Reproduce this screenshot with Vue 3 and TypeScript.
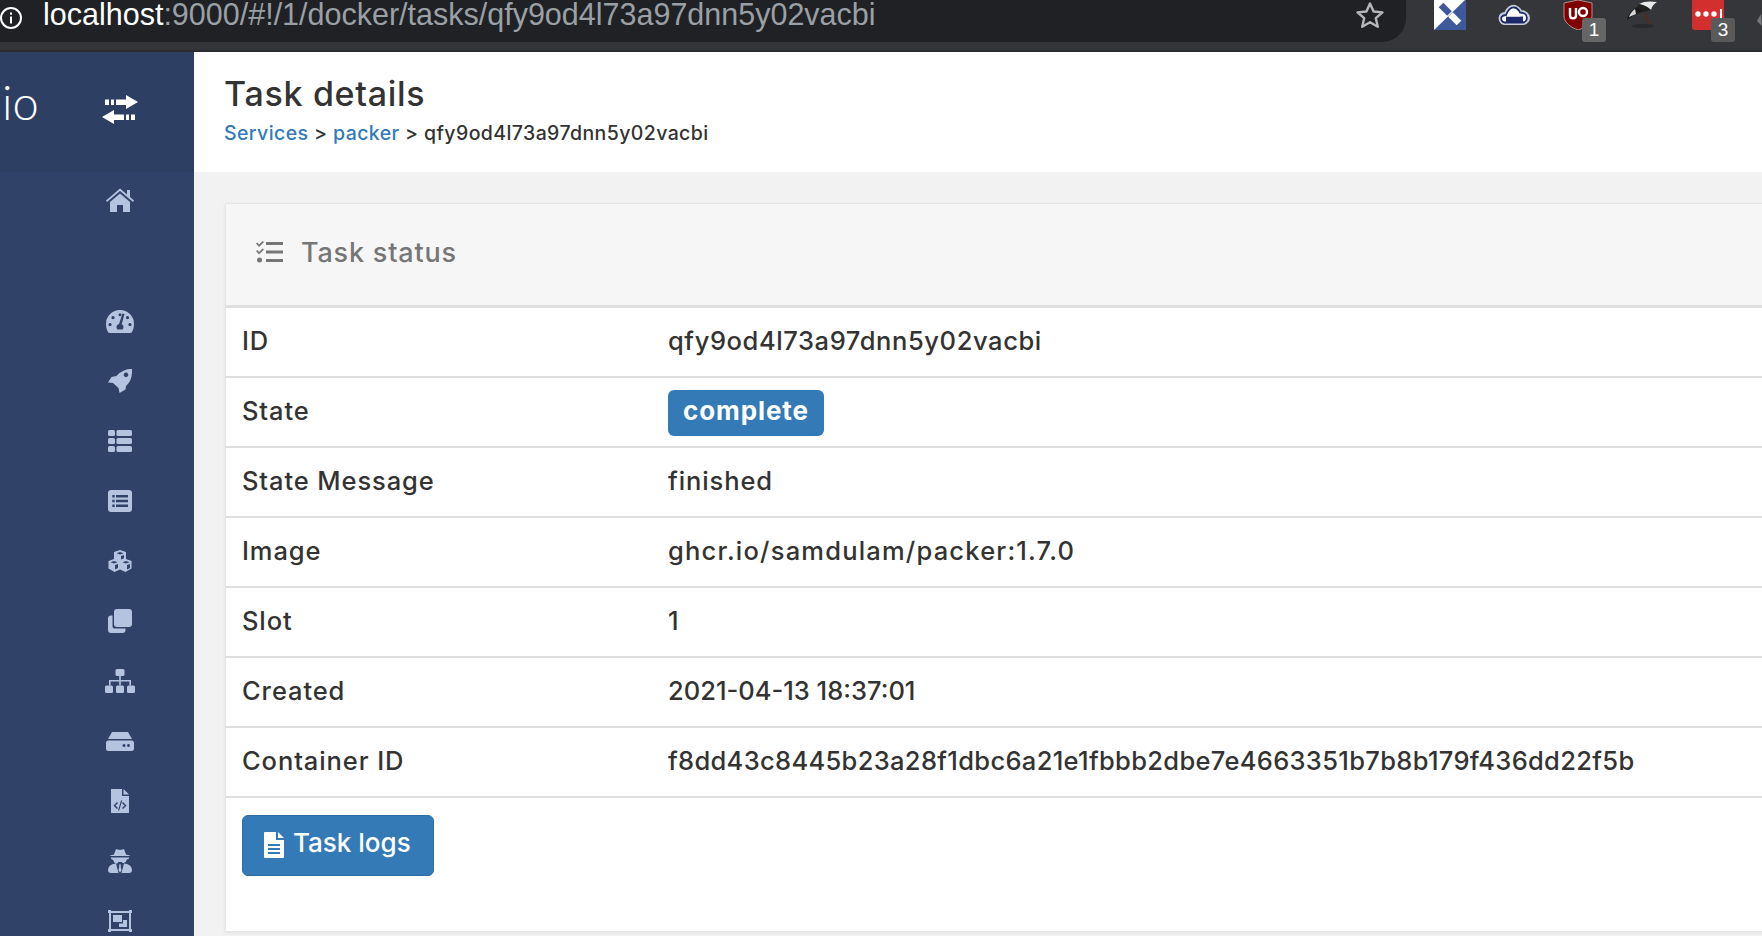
<script setup lang="ts">
interface Row { label: string; value: string; spacing: string; badge?: boolean }
const rows: Row[] = [
  { label: 'ID', value: 'qfy9od4l73a97dnn5y02vacbi', spacing: 'sp-mid' },
  { label: 'State', value: 'complete', spacing: 'sp-wide', badge: true },
  { label: 'State Message', value: 'finished', spacing: 'sp-wide' },
  { label: 'Image', value: 'ghcr.io/samdulam/packer:1.7.0', spacing: 'sp-wider' },
  { label: 'Slot', value: '1', spacing: 'sp-none' },
  { label: 'Created', value: '2021-04-13 18:37:01', spacing: 'sp-none' },
  { label: 'Container ID', value: 'f8dd43c8445b23a28f1dbc6a21e1fbbb2dbe7e4663351b7b8b179f436dd22f5b', spacing: 'sp-low' },
]
</script>

<template>
  <div class="page">
    <header class="chrome">
      <div class="address">
        <svg class="info" width="24" height="24" viewBox="0 0 24 24"><circle cx="11" cy="12" r="10" fill="none" stroke="#fff" stroke-width="2"/><rect x="10" y="10.5" width="2" height="7" fill="#fff"/><rect x="10" y="6.5" width="2" height="2.2" fill="#fff"/></svg>
        <span class="url"><span class="host">localhost</span>:9000/#!/1/docker/tasks/qfy9od4l73a97dnn5y02vacbi</span>
        <svg class="star" width="30" height="28" viewBox="0 0 30 28"><path d="M15 2.5l3.6 8 8.9.9-6.7 5.8 2 8.6L15 21.3 7.200 25.800l2-8.600L2.500 11.400l8.900-.9z" fill="none" stroke="#b5b7ba" stroke-width="2.400" stroke-linejoin="round"/></svg>
      </div>
      <div class="exts">
        <div class="ext ext-x">
          <svg width="32" height="30" viewBox="0 0 32 30"><rect width="32" height="30" fill="#3f5a9c"/><path d="M0 0h31L0 30z" fill="#fff"/><path d="M7 5l8.500 8.500" stroke="#3f5a9c" stroke-width="6.500"/><path d="M16.500 14.500L25 23" stroke="#fff" stroke-width="6.500"/></svg>
        </div>
        <div class="ext ext-cloud">
          <svg width="32" height="24" viewBox="0 0 32 24"><path id="cl" d="M6 22C2 21 1 17 2 14c1-2 3-3 5-3 2-5 6-8 10-7 3 1 5 3 6 5 4 0 8 3 8 7 0 3-3 6-6 6z" fill="#fff" stroke="#c9cdd8" stroke-width="2"/><path d="M6.500 20.500C3.500 20 2.800 17 3.500 15c1-1.500 2.500-2 4.500-2 2-5 5-8 8.500-7.500 3 .5 4.500 3 5.500 5 4 0 7 2 7 5.500 0 2.500-2 4.500-4.500 4.500z" fill="#fff" stroke="#1d2b6b" stroke-width="1.800"/><rect x="8" y="14.500" width="17" height="6" fill="#1d2b6b"/><path d="M8.500 14.500l3-5h9l2 5z" fill="#fff"/></svg>
        </div>
        <div class="ext ext-ub">
          <svg width="30" height="30" viewBox="0 0 30 30"><path d="M1 3l14-3 14 3v13c0 7-8 12-14 14C9 28 1 23 1 16z" fill="#800000" stroke="#b98a8a" stroke-width="1"/><path d="M7 8v7c0 4.500 6 4.500 6 0V8" fill="none" stroke="#fff" stroke-width="2.400"/><circle cx="20" cy="12" r="4" fill="none" stroke="#fff" stroke-width="2.400"/></svg>
          <span class="badge-ext light">1</span>
        </div>
        <div class="ext ext-umb">
          <svg width="32" height="30" viewBox="0 0 32 30"><path d="M1 20C2 14 6 10 11 7l8 4-9 3z" fill="#1c1c1e"/><path d="M3 17c1-3 3-6 6-8l1 5z" fill="#d8d8d8"/><path d="M13 4C18 1 24 1 31 2c-3 2-5 4-6 8-3-3-7-5-12-6z" fill="#e8e8e8"/><path d="M11 7l2-3c5 1 9 3 12 6l-6 2z" fill="#222"/><path d="M18 13l6 12" stroke="#552a20" stroke-width="2"/><ellipse cx="17" cy="26" rx="11" ry="2" fill="#2a2a2c"/></svg>
        </div>
        <div class="ext ext-red">
          <svg width="32" height="30" viewBox="0 0 32 30"><path d="M0 0h32v27a3 3 0 0 1-3 3H3a3 3 0 0 1-3-3z" fill="#d32f2f"/><circle cx="6" cy="14" r="2.700" fill="#fff"/><circle cx="14" cy="14" r="2.700" fill="#fff"/><circle cx="22" cy="14" r="2.700" fill="#fff"/><rect x="28" y="9" width="2" height="10" fill="#fff"/></svg>
          <span class="badge-ext">3</span>
        </div>
        <svg class="ext-edge" width="5" height="12" viewBox="0 0 5 12"><path d="M4 0L0 7l5 5z" fill="#77787b"/></svg>
      </div>
    </header>

    <div class="body">
      <aside class="sidebar">
        <div class="brand">
          <span class="brand-text">io</span>
          <svg class="toggle" width="36" height="30" viewBox="0 0 36 30" fill="#fff"><path d="M24 0l12 7-12 7V10H14V4.500h10z"/><rect x="3" y="4.500" width="4" height="5.500"/><rect x="9" y="4.500" width="3" height="5.500"/><path d="M12 15L0 22l12 7V25h10v-5.500H12z"/><rect x="24" y="19.500" width="3" height="5.500"/><rect x="29" y="19.500" width="4" height="5.500"/></svg>
        </div>
        <nav class="nav">
          <div class="nav-item">
            <svg width="28" height="24" viewBox="0 0 28 24"><path d="M14 3L1 14l-1-1.500L14 .5l7 6V2h3v7l4 3.500-1 1.500z"/><path d="M14 5.500L4 14v10h7v-7h6v7h7V14z"/></svg>
          </div>
          <div class="nav-gap"></div>
          <div class="nav-item">
            <svg width="28" height="23" viewBox="0 0 28 23"><path fill-rule="evenodd" d="M14 0a14 14 0 0 1 14 14c0 3-.8 6-2 8-.4.700-1 1-1.800 1H3.800c-.8 0-1.400-.3-1.800-1-1.200-2-2-5-2-8A14 14 0 0 1 14 0zM14 3.200a1.500 1.500 0 1 0 .01 0zM7 6a1.600 1.600 0 1 0 .01 0zM21.500 6a1.600 1.600 0 1 0 .01 0zM4 13a1.600 1.600 0 1 0 .01 0zM24 13a1.600 1.600 0 1 0 .01 0zM16.500 3.500L13 14c-1.500.4-2.500 1.600-2.500 3 0 1 .5 2 1 2.500h5c.5-.5 1-1.500 1-2.500 0-1.300-.7-2.300-1.800-2.800L18.500 4z"/></svg>
          </div>
          <div class="nav-item">
            <svg width="24" height="24" viewBox="0 0 24 24"><path fill-rule="evenodd" d="M24 0c.5 7-1.500 13.500-6 17l-.5 3.500L11.500 24l-1-5-5.500-5-5-.5L3.500 8 8.500 7C12.500 2.500 18.500-.5 24 0zM18 3.600a2.300 2.300 0 1 0 .01 0z"/></svg>
          </div>
          <div class="nav-item">
            <svg width="24" height="22" viewBox="0 0 24 22"><rect width="7" height="6" y="0" rx="1.500"/><rect x="8.500" width="15.500" height="6" rx="1.500"/><rect width="7" height="6" y="8" rx="1.500"/><rect x="8.500" y="8" width="15.500" height="6" rx="1.500"/><rect width="7" height="6" y="16" rx="1.500"/><rect x="8.500" y="16" width="15.500" height="6" rx="1.500"/></svg>
          </div>
          <div class="nav-item">
            <svg width="24" height="22" viewBox="0 0 24 22"><path fill-rule="evenodd" d="M3 0h18a3 3 0 0 1 3 3v16a3 3 0 0 1-3 3H3a3 3 0 0 1-3-3V3a3 3 0 0 1 3-3zM4.300 5v2.400h2.400V5zM8 5v2.400h12V5zM4.300 9.800v2.400h2.400V9.800zM8 9.800v2.400h12V9.800zM4.300 14.600V17h2.400v-2.400zM8 14.600V17h12v-2.400z"/></svg>
          </div>
          <div class="nav-item">
            <svg width="24" height="22" viewBox="0 0 24 22"><path fill-rule="evenodd" d="M12 0l6 2v7l5.500 2v7.500L17.500 22 12 19.500 6.500 22 .5 18.500V11L6 9V2zM12 2L8.500 3.200 12 4.500l3.500-1.300zM6 11L2.500 12.200 6 13.500l3.500-1.300zM18 11l-3.500 1.200L18 13.500l3.500-1.300zM13 6v3.500l3-1.300V5zM7 15v4.500l3-1.600V14zM19 15v4.500l3-1.600V14z"/></svg>
          </div>
          <div class="nav-item">
            <svg width="24" height="24" viewBox="0 0 24 24"><rect x="6" width="18" height="18" rx="3"/><path d="M4.500 6.500v11a2 2 0 0 0 2 2h11V21a3 3 0 0 1-3 3H3a3 3 0 0 1-3-3V9.500a3 3 0 0 1 3-3z"/></svg>
          </div>
          <div class="nav-item">
            <svg width="30" height="24" viewBox="0 0 30 24"><rect x="10.500" width="9" height="7" rx="1.500"/><rect y="16.500" width="8" height="7.500" rx="1.500"/><rect x="11" y="16.500" width="8" height="7.500" rx="1.500"/><rect x="22" y="16.500" width="8" height="7.500" rx="1.500"/><path d="M14.200 7h1.600v4H26v5.500h-1.600v-4H15.800v4h-1.600v-4H5.600v4H4V11h10.200z"/></svg>
          </div>
          <div class="nav-item">
            <svg width="28" height="19" viewBox="0 0 28 19"><path d="M6 0h16l4 7H2z"/><path fill-rule="evenodd" d="M2.500 8.500h23A2.500 2.500 0 0 1 28 11v5.500a2.500 2.500 0 0 1-2.500 2.500h-23A2.500 2.500 0 0 1 0 16.500V11a2.500 2.500 0 0 1 2.500-2.500zM18 12a1.500 1.500 0 1 0 .01 0zM22.500 12a1.500 1.500 0 1 0 .01 0z"/></svg>
          </div>
          <div class="nav-item">
            <svg width="18" height="24" viewBox="0 0 18 24"><path fill-rule="evenodd" d="M0 0h11v7h7v17H0zM6 13l-3.500 3.500L6 20l1-1-2.500-2.500L7 14zM12 13l-1 1 2.500 2.500L11 19l1 1 3.500-3.500zM10 11.500l-3 10h1.200l3-10z"/><path d="M12.500 0L18 5.500h-5.500z"/></svg>
          </div>
          <div class="nav-item">
            <svg width="24" height="24" viewBox="0 0 24 24"><path fill-rule="evenodd" d="M8 0c1 0 2.500 1 4 1s3-1 4-1l2 5.500 4 1V7H2v-.5l4-1zM3 8.500h18v1.200l-2.200.8c-.5 1.700-1.300 3-2.800 3.500h-1.200L13.500 13h-3l-1.200 1.500H8c-1.500-.5-2.300-1.800-2.800-3.500L3 9.700zM5 15l3-.5L10.500 24H3a3 3 0 0 1-3-3c0-3 2-5 5-6zM19 15l-3-.5L13.500 24H21a3 3 0 0 0 3-3c0-3-2-5-5-6zM11 15.500h2l-.3 2 .8 4-1.500 2-1.500-2 .8-4z"/></svg>
          </div>
          <div class="nav-item">
            <svg width="24" height="22" viewBox="0 0 24 22"><path fill-rule="evenodd" d="M0 0h3v1h18V0h3v3h-1v16h1v3h-3v-1H3v1H0v-3h1V3H0zM3 3v16h18V3zM5 5h9v7H5zM11 13.500h4V10h4v7h-8z"/></svg>
          </div>
        </nav>
      </aside>

      <main class="content">
        <div class="page-head">
          <h1 class="title">Task details</h1>
          <div class="crumbs"><a class="link">Services</a> &gt; <a class="link">packer</a> &gt; qfy9od4l73a97dnn5y02vacbi</div>
        </div>
        <div class="wrap">
          <section class="card">
            <div class="card-head">
              <svg width="28" height="22" viewBox="0 0 28 22" fill="#767676"><path d="M1 2.500l1.500-1 1.500 2L7.500 0 9 1 4 6zM1 10l1.500-1 1.500 2 3.500-3.500L9 8.500l-5 5z"/><circle cx="4.500" cy="19" r="2.500"/><rect x="11" y="1" width="17" height="3"/><rect x="11" y="9.500" width="17" height="3"/><rect x="11" y="18" width="17" height="3"/></svg>
              <span class="card-title">Task status</span>
            </div>
            <table class="details">
              <tbody>
                <tr v-for="row in rows" :key="row.label">
                  <td class="lbl">{{ row.label }}</td>
                  <td class="val" :class="row.spacing">
                    <span v-if="row.badge" class="state">{{ row.value }}</span>
                    <template v-else>{{ row.value }}</template>
                  </td>
                </tr>
              </tbody>
            </table>
            <div class="actions">
              <button class="logs" type="button">
                <svg width="20" height="26" viewBox="0 0 20 26"><path fill-rule="evenodd" d="M1 0h11v8h8v17a1 1 0 0 1-1 1H1a1 1 0 0 1-1-1V1a1 1 0 0 1 1-1zM4 12v2h12v-2zM4 16v2h12v-2zM4 20v2h12v-2z" fill="#fff"/><path d="M14 0l6 6h-6z" fill="#fff"/></svg>
                <span class="logs-text">Task logs</span>
              </button>
            </div>
          </section>
        </div>
      </main>
    </div>
  </div>
</template>

<style>
html, body { margin: 0; overflow: hidden; background: #f2f2f2; }
</style>

<style scoped>
.page { width: 1762px; height: 936px; overflow: hidden; display: flex; flex-direction: column; font-family: Inter, "Liberation Sans", sans-serif; color: #333; }
.chrome { height: 52px; box-sizing: border-box; background: #35363a; border-bottom: 2px solid #2a2b2e; display: flex; flex: none; }
.address { width: 1406px; height: 42px; background: #202124; border-bottom-right-radius: 24px; display: flex; align-items: center; padding-bottom: 14px; box-sizing: border-box; flex: none; }
.info { margin-top: 8px; flex: none; }
.url { margin: 0 0 0 19px; font: 30.500px/28px "Liberation Sans", sans-serif; color: #9aa0a6; white-space: nowrap; }
.host { color: #fff; }
.star { margin-left: auto; margin-right: 21px; margin-top: 2px; }
.exts { position: relative; flex: 1; display: flex; align-items: flex-start; padding-left: 28px; gap: 32px; }
.ext { position: relative; height: 30px; }
.ext-cloud { padding-top: 2px; }
.ext-ub { margin-left: 1px; }
.ext-umb { margin-left: 1px; }
.ext-red { margin-left: 2px; }
.ext-edge { position: absolute; right: 0; top: 14px; }
.badge-ext { position: absolute; left: 19px; top: 18px; width: 24px; height: 24px; border-radius: 3px; background: #5a5a5a; color: #fff; font: 19px/24px "Liberation Sans", sans-serif; text-align: center; }
.badge-ext.light { background: #666; }
.body { flex: 1; min-height: 0; display: flex; }
.sidebar { width: 194px; flex: none; background: #304268; overflow: hidden; }
.brand { height: 120px; background: #2e3f64; display: flex; align-items: center; padding-left: 2px; position: relative; box-sizing: border-box; padding-bottom: 20px; }
.brand-text { font: 300 47px/1 Lato, sans-serif; color: #fff; }
.toggle { position: absolute; left: 102px; top: 43px; }
.nav { width: 240px; margin-top: -2px; }
.nav-item { height: 60px; display: flex; align-items: center; justify-content: center; }
.nav-item svg { fill: #b4c3e0; }
.nav-gap { height: 61px; }
.content { flex: 1; min-width: 0; background: #f2f2f2; }
.page-head { height: 120px; box-sizing: border-box; background: #fff; padding: 22px 0 0 224px; margin-left: -194px; }
.title { margin: 0; font-size: 34px; line-height: 40px; font-weight: 500; color: #333; letter-spacing: .7px; }
.crumbs { font-size: 19.500px; line-height: 26px; margin-top: 6px; color: #333; font-weight: 500; letter-spacing: .4px; }
.link { color: #337ab7; }
.wrap { padding: 31px 0 0 31px; margin-right: -20px; }
.card { background: #fff; border: 1px solid #e6e6e6; box-shadow: 0 1px 3px rgba(0,0,0,.08); height: 729px; box-sizing: border-box; }
.card-head { height: 104px; box-sizing: border-box; background: #f6f6f6; border-bottom: 3px solid #dfdfdf; display: flex; align-items: center; padding: 0 0 5px 29px; gap: 18px; }
.card-title { font-size: 27px; font-weight: 500; color: #767676; letter-spacing: .8px; }
.details { width: 100%; border-collapse: collapse; font-size: 25.500px; font-weight: 500; }
.details td { height: 65px; padding: 0 16px 3px; border-bottom: 2px solid #dedede; box-sizing: content-box; white-space: nowrap; }
.lbl { width: 394px; letter-spacing: .9px; }
.sp-none { letter-spacing: 0; }
.sp-low { letter-spacing: .33px; }
.sp-mid { letter-spacing: .6px; }
.sp-wide { letter-spacing: .9px; }
.sp-wider { letter-spacing: 1.200px; }
.state { display: inline-block; background: #337ab7; color: #fff; font-weight: 700; padding: 0 15px; height: 46px; line-height: 42px; margin-top: 5px; border-radius: 6px; font-size: 26px; vertical-align: middle; }
.actions { padding: 17px 16px 0; }
.logs { display: flex; align-items: center; gap: 9px; width: 192px; height: 61px; padding: 0 0 5px 21px; background: #337ab7; border: 1px solid #2e6da4; border-radius: 6px; color: #fff; font: 500 26px Inter, sans-serif; box-sizing: border-box; }
.logs svg { margin-top: 3px; }
.logs-text { line-height: 1; }
</style>
